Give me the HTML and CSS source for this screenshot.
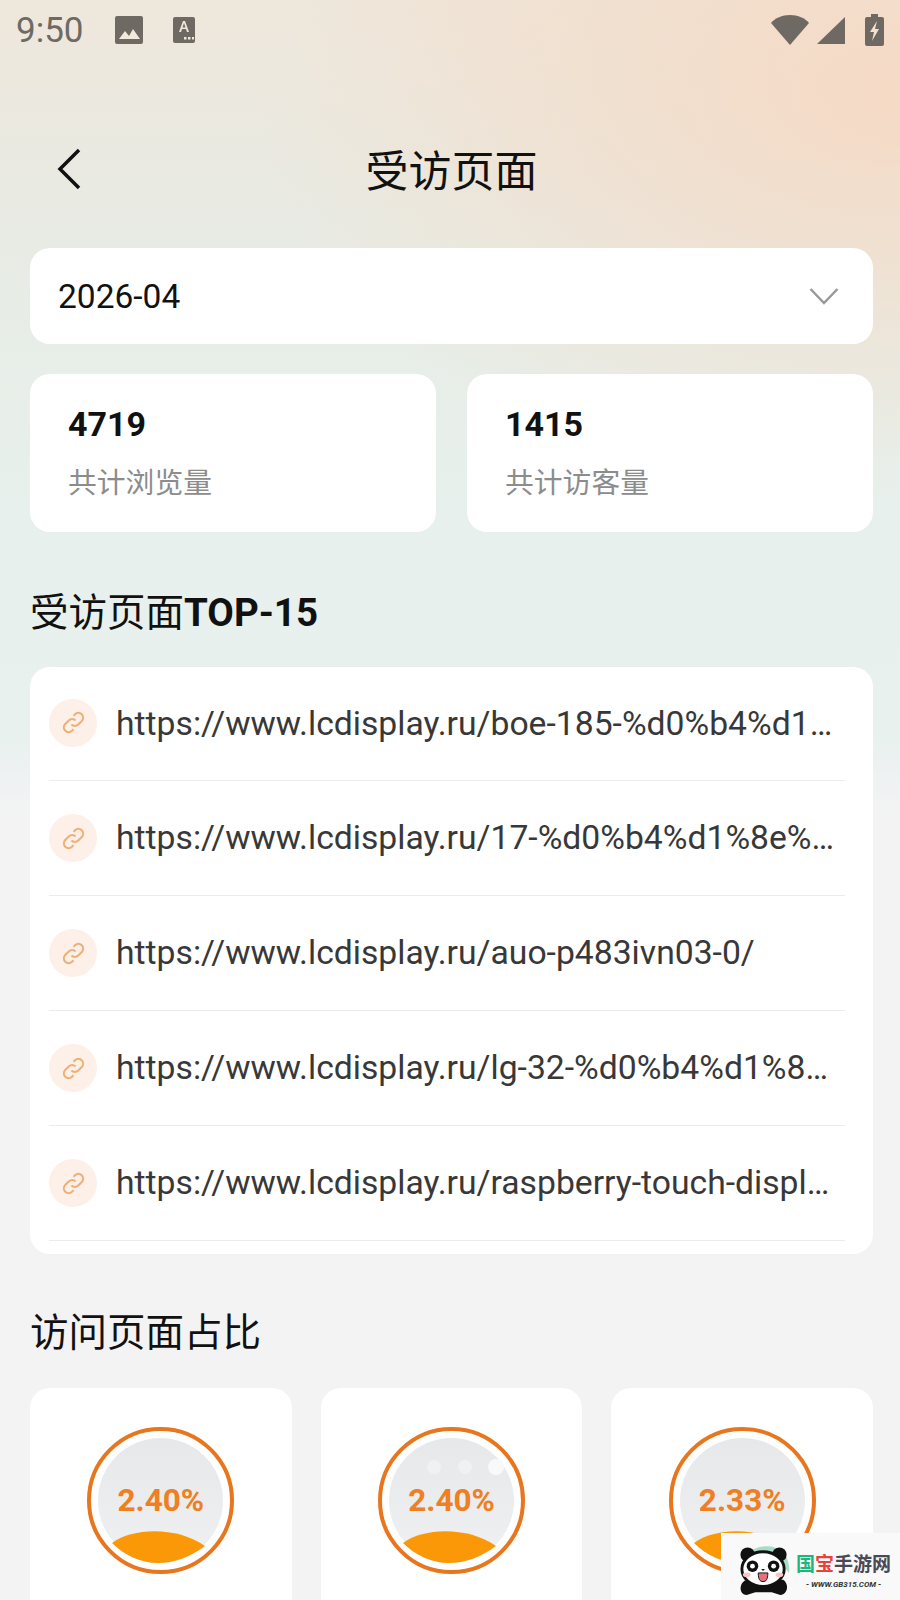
FILE: index.html
```html
<!DOCTYPE html>
<html lang="zh-CN">

<head>
    <meta charset="UTF-8">
    <meta name="viewport" content="width=device-width, initial-scale=1.0">
    <title>受访页面</title>
    <link rel="stylesheet" href="styles.css">
</head>

<body>
    <div class="page">
        <div class="status-bar">
            <span class="status-time">9:50</span>
            <svg class="status-pic" viewBox="0 0 28 28">
                <rect width="28" height="28" rx="2" fill="#6e6a63" />
                <path d="M4 23l6-8 4 5 4-7 7 10z" fill="#f1e9dc" />
            </svg>
            <svg class="status-a" viewBox="0 0 22 26">
                <rect width="22" height="26" rx="2" fill="#6e6a63" />
                <path d="M6 15l4-11h2l4 11h-2l-1-3H9l-1 3zM9.500 10.500h3L11 6z" fill="#f1e9dc" />
                <rect x="11" y="20" width="2.500" height="2.500" fill="#f1e9dc" />
                <rect x="15" y="20" width="2.500" height="2.500" fill="#f1e9dc" />
                <rect x="19" y="20" width="2" height="2.500" fill="#f1e9dc" />
            </svg>
            <span class="status-space"></span>
            <svg class="status-wifi" viewBox="0 0 38 30">
                <path d="M0 8C4 3 11 0 19 0s15 3 19 8L19 30z" fill="#6e6a63" />
            </svg>
            <svg class="status-signal" viewBox="0 0 28 27">
                <path d="M28 0v27H0z" fill="#6e6a63" />
            </svg>
            <svg class="status-battery" viewBox="0 0 19 32">
                <path d="M6 0h7v3h4a2 2 0 0 1 2 2v25a2 2 0 0 1-2 2H2a2 2 0 0 1-2-2V5a2 2 0 0 1 2-2h4z" fill="#6e6a63" />
                <path d="M12 7l-7 11h4l-2 9 7-12h-4z" fill="#f1e3d2" />
            </svg>
        </div>

        <header class="top-bar">
            <svg class="back-icon" viewBox="0 0 24 42">
                <path d="M22 2L3 21l19 19" fill="none" stroke="#111" stroke-width="3.500" />
            </svg>
            <h1>受访页面</h1>
        </header>

        <div class="card month-select">
            <span>2026-04</span>
            <svg class="down-icon" viewBox="0 0 30 18">
                <path d="M1.500 2L15 16 28.500 2" fill="none" stroke="#999" stroke-width="2.500" />
            </svg>
        </div>

        <div class="stats">
            <div class="card stat">
                <div class="stat-num">4719</div>
                <div class="stat-label">共计浏览量</div>
            </div>
            <div class="card stat">
                <div class="stat-num">1415</div>
                <div class="stat-label">共计访客量</div>
            </div>
        </div>

        <h2 class="section-title section-top">受访页面<b>TOP-15</b></h2>

        <div class="card link-list">
            <div class="link-row">
                <span class="link-icon"><svg viewBox="0 0 24 24"><path d="M10 14a4.500 4.500 0 0 0 6.500 0l3.500-3.500A4.600 4.600 0 0 0 13.500 4L12 5.500" /><path d="M14 10a4.500 4.500 0 0 0-6.500 0L4 13.500A4.600 4.600 0 0 0 10.500 20l1.500-1.500" /></svg></span>
                <span class="link-text">https://www.lcdisplay.ru/boe-185-%d0%b4%d1…</span>
            </div>
            <div class="link-row">
                <span class="link-icon"><svg viewBox="0 0 24 24"><path d="M10 14a4.500 4.500 0 0 0 6.500 0l3.500-3.500A4.600 4.600 0 0 0 13.500 4L12 5.500" /><path d="M14 10a4.500 4.500 0 0 0-6.500 0L4 13.500A4.600 4.600 0 0 0 10.500 20l1.500-1.500" /></svg></span>
                <span class="link-text">https://www.lcdisplay.ru/17-%d0%b4%d1%8e%…</span>
            </div>
            <div class="link-row">
                <span class="link-icon"><svg viewBox="0 0 24 24"><path d="M10 14a4.500 4.500 0 0 0 6.500 0l3.500-3.500A4.600 4.600 0 0 0 13.500 4L12 5.500" /><path d="M14 10a4.500 4.500 0 0 0-6.500 0L4 13.500A4.600 4.600 0 0 0 10.500 20l1.500-1.500" /></svg></span>
                <span class="link-text">https://www.lcdisplay.ru/auo-p483ivn03-0/</span>
            </div>
            <div class="link-row">
                <span class="link-icon"><svg viewBox="0 0 24 24"><path d="M10 14a4.500 4.500 0 0 0 6.500 0l3.500-3.500A4.600 4.600 0 0 0 13.500 4L12 5.500" /><path d="M14 10a4.500 4.500 0 0 0-6.500 0L4 13.500A4.600 4.600 0 0 0 10.500 20l1.500-1.500" /></svg></span>
                <span class="link-text">https://www.lcdisplay.ru/lg-32-%d0%b4%d1%8…</span>
            </div>
            <div class="link-row">
                <span class="link-icon"><svg viewBox="0 0 24 24"><path d="M10 14a4.500 4.500 0 0 0 6.500 0l3.500-3.500A4.600 4.600 0 0 0 13.500 4L12 5.500" /><path d="M14 10a4.500 4.500 0 0 0-6.500 0L4 13.500A4.600 4.600 0 0 0 10.500 20l1.500-1.500" /></svg></span>
                <span class="link-text">https://www.lcdisplay.ru/raspberry-touch-displ…</span>
            </div>
        </div>

        <h2 class="section-title section-share">访问页面占比</h2>

        <div class="share-row">
            <div class="card share">
                <div class="ball">
                    <div class="ball-inner">
                        <svg class="wave" viewBox="0 0 93 32"><path d="M0 12C22 -4 66 -4 93 15 78 26 62 32 46 32 28 32 12 24 0 12z" /></svg>
                        <span class="ball-num">2.40%</span>
                    </div>
                </div>
            </div>
            <div class="card share">
                <div class="ball">
                    <div class="ball-inner">
                        <i class="bubble bubble-a"></i>
                        <i class="bubble bubble-b"></i>
                        <i class="bubble bubble-c"></i>
                        <svg class="wave" viewBox="0 0 93 32"><path d="M0 12C22 -4 66 -4 93 15 78 26 62 32 46 32 28 32 12 24 0 12z" /></svg>
                        <span class="ball-num">2.40%</span>
                    </div>
                </div>
            </div>
            <div class="card share">
                <div class="ball">
                    <div class="ball-inner">
                        <svg class="wave" viewBox="0 0 93 32"><path d="M0 12C22 -4 66 -4 93 15 78 26 62 32 46 32 28 32 12 24 0 12z" /></svg>
                        <span class="ball-num">2.33%</span>
                    </div>
                </div>
            </div>
        </div>

        <div class="watermark">
            <svg class="panda" viewBox="0 0 54 52">
                <path d="M10 8C20 -2 38 -2 46 6c6 6 8 14 7 22L40 12z" fill="#a9dcc6" />
                <circle cx="10" cy="9" r="7.500" fill="#111" />
                <circle cx="43" cy="9" r="7.500" fill="#111" />
                <path d="M7 36c-7 5-5 15 2 15l9-3h17l9 3c7 0 10-11 3-16z" fill="#111" />
                <ellipse cx="26" cy="24" rx="22" ry="18" fill="#fff" stroke="#111" stroke-width="3" />
                <ellipse cx="15" cy="21" rx="6" ry="6" fill="#111" />
                <ellipse cx="37" cy="21" rx="6" ry="6" fill="#111" />
                <circle cx="15" cy="21" r="2.500" fill="#fff" />
                <circle cx="37" cy="21" r="2.500" fill="#fff" />
                <ellipse cx="9" cy="30" rx="4" ry="2.500" fill="#f6c4c4" />
                <ellipse cx="43" cy="30" rx="4" ry="2.500" fill="#f6c4c4" />
                <path d="M21 28h10c0 7-2 9-5 9s-5-2-5-9z" fill="#e8707a" stroke="#111" />
                <path d="M24 24h4l-2 2z" fill="#111" />
            </svg>
            <div class="wm-text">
                <div class="wm-name"><span class="wm-green">国</span><span class="wm-red">宝</span><span class="wm-dark">手游网</span></div>
                <div class="wm-url">- WWW.GB315.COM -</div>
            </div>
        </div>
    </div>
</body>

</html>
```

FILE: styles.css
```css
* {
    box-sizing: border-box;
}

html,
body {
    margin: 0;
    padding: 0;
}

body {
    font-family: Roboto, "Noto Sans CJK SC", sans-serif;
    color: #111;
}

.page {
    position: relative;
    width: 900px;
    height: 1600px;
    overflow: hidden;
    padding: 0 27px 0 30px;
    background-color: #f3f3f4;
    background-image:
        radial-gradient(ellipse 640px 400px at 100% 6%, rgba(247, 214, 190, 0.8), rgba(247, 214, 190, 0) 100%),
        linear-gradient(180deg, #eee7dc 0, #e8ebe4 240px, #e7f0ec 500px, #e9f1ef 740px, #f3f3f4 810px);
}

/* Status bar */
.status-bar {
    display: flex;
    align-items: center;
    height: 60px;
    margin: 0 -11px 0 -14px;
}

.status-time {
    width: 99px;
    font-size: 35px;
    color: #6e6a63;
}

.status-pic {
    width: 28px;
    height: 28px;
    margin-right: 30px;
}

.status-a {
    width: 22px;
    height: 26px;
}

.status-space {
    flex: 1;
}

.status-wifi {
    width: 38px;
    height: 30px;
    margin-right: 8px;
}

.status-signal {
    width: 28px;
    height: 27px;
    margin-right: 20px;
}

.status-battery {
    width: 19px;
    height: 32px;
}

/* Header */
.top-bar {
    display: flex;
    align-items: center;
    justify-content: center;
    position: relative;
    height: 60px;
    margin-top: 82px;
}

.top-bar h1 {
    margin: 0;
    font-size: 43px;
    font-weight: 400;
    line-height: 60px;
}

.back-icon {
    position: absolute;
    left: 27px;
    top: 6px;
    width: 24px;
    height: 42px;
}

.card {
    background-color: #fff;
    border-radius: 20px;
}

.month-select {
    display: flex;
    align-items: center;
    justify-content: space-between;
    height: 96px;
    margin-top: 46px;
    padding: 0 34px 0 28px;
    font-size: 33.500px;
}

.down-icon {
    width: 30px;
    height: 18px;
}

.stats {
    display: flex;
    gap: 31px;
    margin-top: 30px;
}

.stat {
    flex: 1;
    height: 158px;
    padding: 31px 38px 0;
}

.stat-num {
    font-size: 34px;
    font-weight: 700;
    line-height: 38px;
}

.stat-label {
    margin-top: 20px;
    font-size: 28.800px;
    line-height: 40px;
    color: #8c8c8c;
}

.section-title {
    margin: 0;
    font-size: 38.500px;
    font-weight: 400;
    line-height: 50px;
}

.section-title b {
    font-weight: 700;
}

.section-top {
    margin-top: 56px;
}

.section-share {
    margin-top: 54px;
}

/* Link list */
.link-list {
    height: 587px;
    margin-top: 29px;
    padding: 0 28px 0 19px;
}

.link-row {
    display: flex;
    align-items: center;
    gap: 19px;
    height: 115px;
    border-bottom: 1px solid #ececec;
}

.link-row:first-child {
    height: 114px;
}

.link-icon {
    flex: none;
    display: flex;
    align-items: center;
    justify-content: center;
    width: 48px;
    height: 48px;
    border-radius: 50%;
    background-color: #fdf0e8;
}

.link-row:first-child .link-icon {
    margin-bottom: 2px;
}

.link-icon svg {
    width: 25px;
    height: 25px;
    fill: none;
    stroke: #eeb078;
    stroke-width: 2;
}

.link-text {
    font-size: 33.700px;
    line-height: 40px;
    color: #383838;
    white-space: nowrap;
}

/* Percent balls */
.share-row {
    display: flex;
    gap: 29px;
    margin-top: 30px;
}

.share {
    flex: 1;
    height: 300px;
    padding-top: 39px;
}

.ball {
    width: 147px;
    height: 147px;
    margin: 0 auto;
    padding: 7px;
    border: 4px solid #e8761e;
    border-radius: 50%;
}

.ball-inner {
    position: relative;
    display: flex;
    align-items: center;
    justify-content: center;
    height: 100%;
    border-radius: 50%;
    background-image: linear-gradient(180deg, #e7e8ea, #eff0f2);
}

.ball-num {
    position: relative;
    font-size: 31.500px;
    font-weight: 700;
    color: #ee7f22;
}

.wave {
    position: absolute;
    left: 14px;
    bottom: 0;
    width: 93px;
    height: 32px;
    fill: #fb9808;
}

.bubble {
    position: absolute;
    border-radius: 50%;
    background-color: #f0f1f2;
}

.bubble-a {
    left: 38px;
    top: 22px;
    width: 14px;
    height: 14px;
}

.bubble-b {
    left: 69px;
    top: 22px;
    width: 14px;
    height: 14px;
}

.bubble-c {
    left: 99px;
    top: 21px;
    width: 16px;
    height: 16px;
    background-color: #f9f9f9;
}

/* Watermark */
.watermark {
    position: absolute;
    right: 0;
    bottom: 0;
    display: flex;
    align-items: center;
    gap: 6px;
    width: 179px;
    height: 67px;
    padding: 9px 0 0 17px;
    background-color: #f9f9f9;
}

.panda {
    flex: none;
    width: 52px;
    height: 50px;
}

.wm-name {
    font-size: 19px;
    font-weight: 700;
    line-height: 24px;
    white-space: nowrap;
}

.wm-green {
    color: #1fb57e;
}

.wm-red {
    color: #e8423a;
}

.wm-dark {
    color: #4a4a55;
}

.wm-url {
    margin-top: 3px;
    font-size: 8px;
    line-height: 10px;
    font-weight: 700;
    font-style: italic;
    color: #333;
    text-align: center;
    white-space: nowrap;
}
```
